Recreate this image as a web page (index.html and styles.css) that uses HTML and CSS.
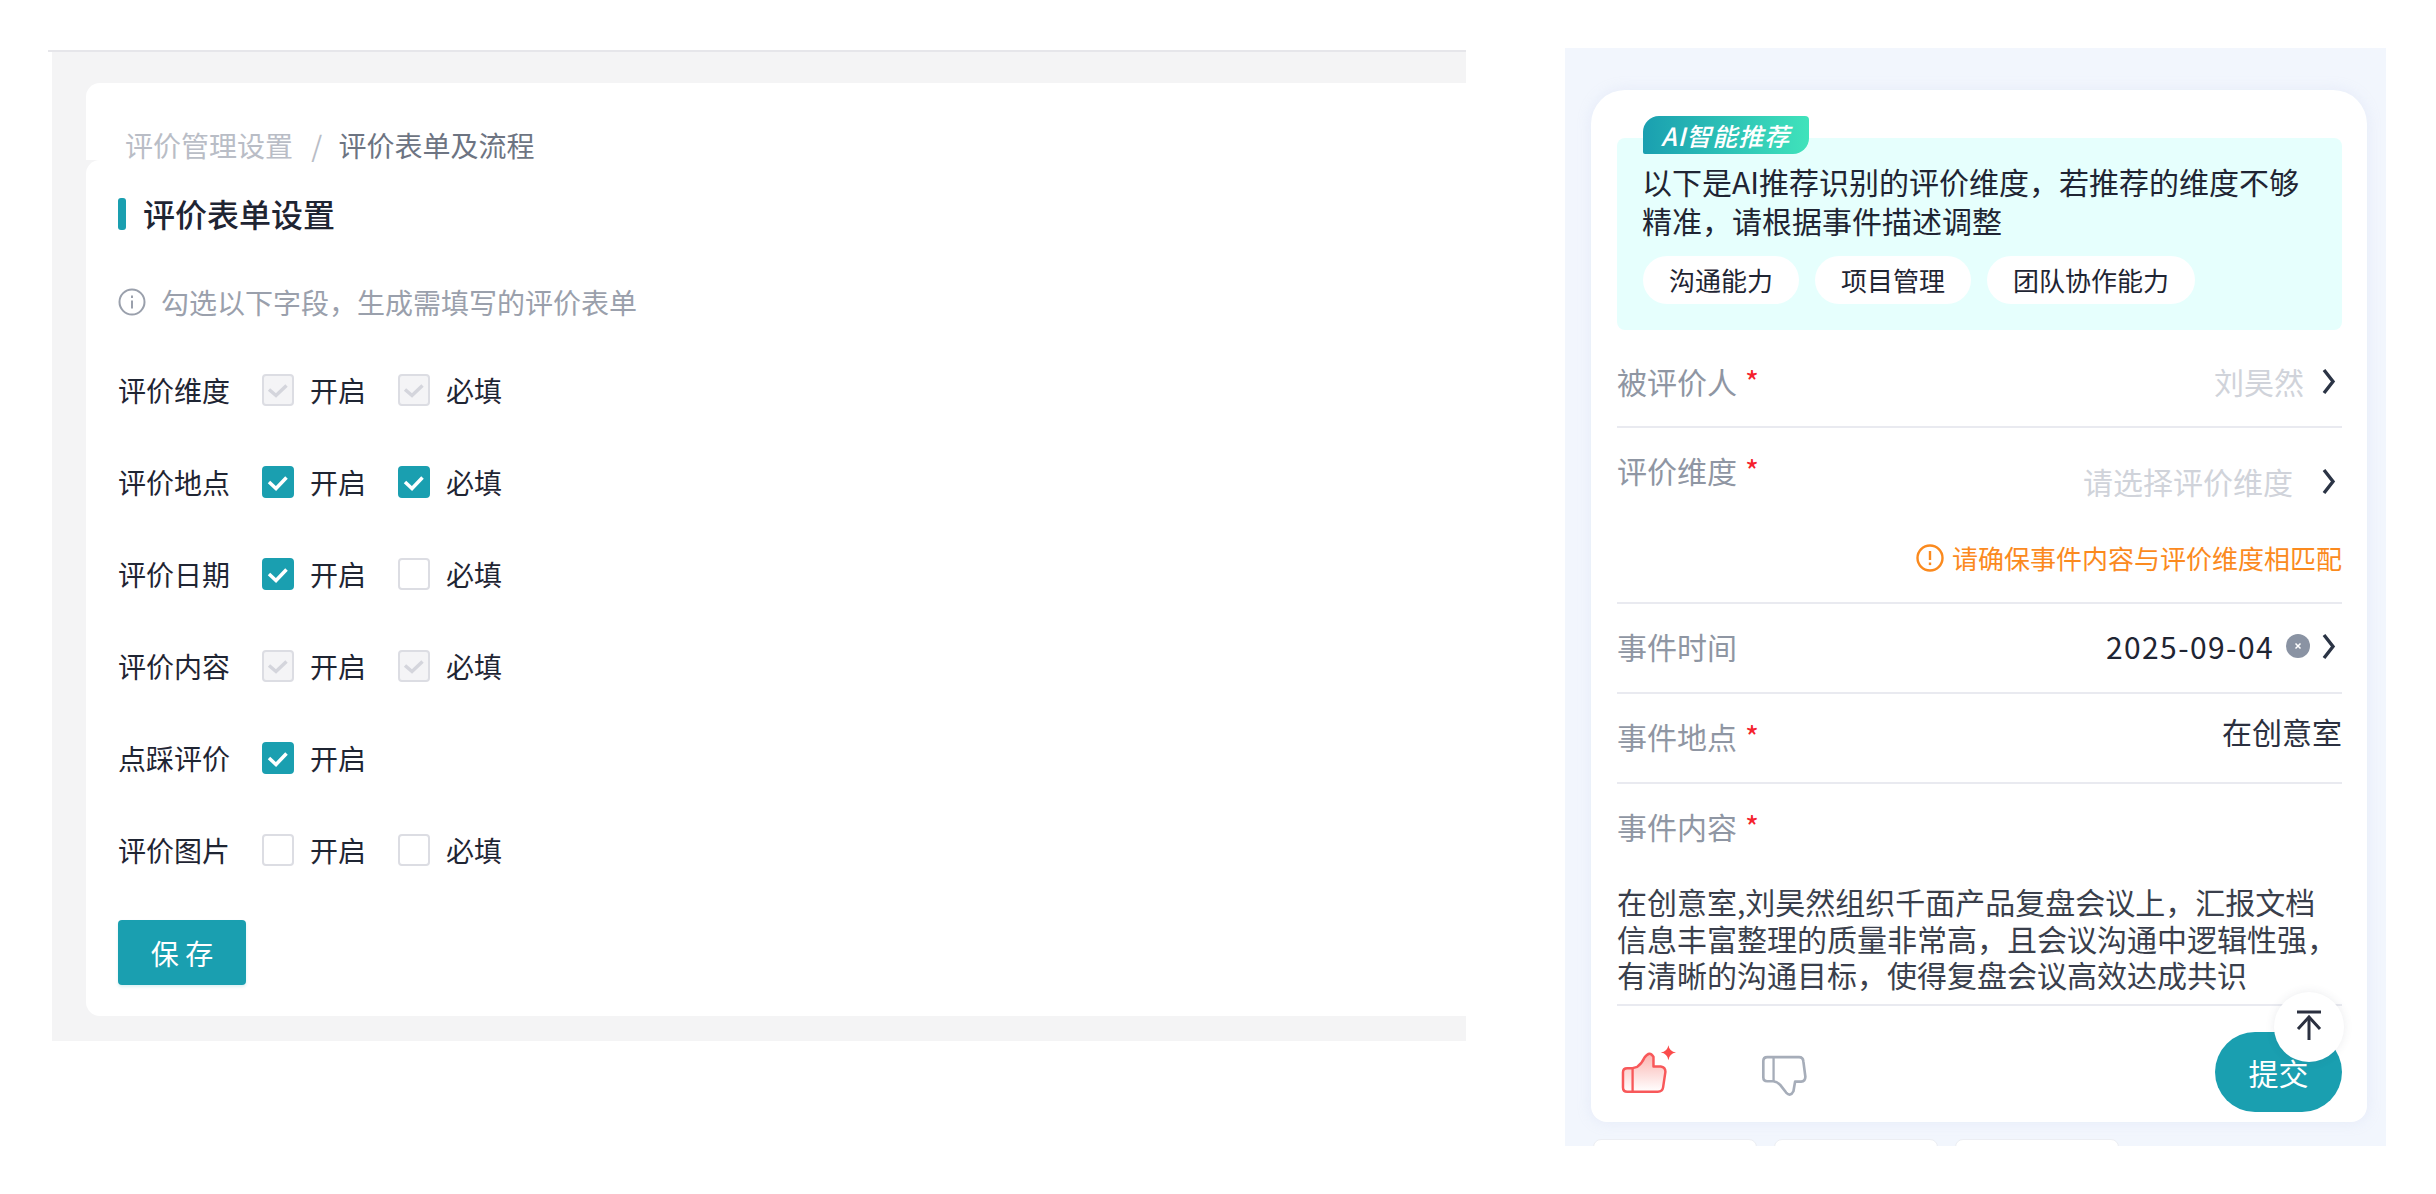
FILE: index.html
```html
<!DOCTYPE html>
<html lang="zh-CN">
<head>
    <meta charset="UTF-8">
    <title>评价表单设置</title>
    <link rel="stylesheet" href="styles.css">
</head>
<body>
    <div class="page">
        <!-- admin side -->
        <div class="admin">
            <div class="admin-body">
                <div class="crumb-card">
                    <span class="crumb-muted">评价管理设置</span>
                    <span class="crumb-sep">/</span>
                    <span class="crumb-current">评价表单及流程</span>
                </div>
                <div class="form-card">
                    <h1 class="form-title">评价表单设置</h1>
                    <div class="form-hint">
                        <svg class="hint-icon" viewBox="0 0 28 28" fill="none" stroke="#9aa0ac" stroke-width="2">
                            <circle cx="14" cy="14" r="12.500"/>
                            <path d="M14 12.500v8"/>
                            <path d="M14 7.500v2.600"/>
                        </svg>
                        <span>勾选以下字段，生成需填写的评价表单</span>
                    </div>

                    <div class="field-row">
                        <span class="field-name">评价维度</span>
                        <span class="cb cb-disabled"><svg viewBox="0 0 28 28"><path d="M5 13.500l7 6 10.500-10"/></svg></span>
                        <span class="opt">开启</span>
                        <span class="cb cb-disabled"><svg viewBox="0 0 28 28"><path d="M5 13.500l7 6 10.500-10"/></svg></span>
                        <span class="opt">必填</span>
                    </div>
                    <div class="field-row">
                        <span class="field-name">评价地点</span>
                        <span class="cb cb-on"><svg viewBox="0 0 28 28"><path d="M5 14l7 6.500 10.500-11"/></svg></span>
                        <span class="opt">开启</span>
                        <span class="cb cb-on"><svg viewBox="0 0 28 28"><path d="M5 14l7 6.500 10.500-11"/></svg></span>
                        <span class="opt">必填</span>
                    </div>
                    <div class="field-row">
                        <span class="field-name">评价日期</span>
                        <span class="cb cb-on"><svg viewBox="0 0 28 28"><path d="M5 14l7 6.500 10.500-11"/></svg></span>
                        <span class="opt">开启</span>
                        <span class="cb"></span>
                        <span class="opt">必填</span>
                    </div>
                    <div class="field-row">
                        <span class="field-name">评价内容</span>
                        <span class="cb cb-disabled"><svg viewBox="0 0 28 28"><path d="M5 13.500l7 6 10.500-10"/></svg></span>
                        <span class="opt">开启</span>
                        <span class="cb cb-disabled"><svg viewBox="0 0 28 28"><path d="M5 13.500l7 6 10.500-10"/></svg></span>
                        <span class="opt">必填</span>
                    </div>
                    <div class="field-row">
                        <span class="field-name">点踩评价</span>
                        <span class="cb cb-on"><svg viewBox="0 0 28 28"><path d="M5 14l7 6.500 10.500-11"/></svg></span>
                        <span class="opt">开启</span>
                    </div>
                    <div class="field-row">
                        <span class="field-name">评价图片</span>
                        <span class="cb"></span>
                        <span class="opt">开启</span>
                        <span class="cb"></span>
                        <span class="opt">必填</span>
                    </div>

                    <button class="save-btn" type="button">保 存</button>
                </div>
            </div>
        </div>

        <!-- mobile preview -->
        <div class="mobile">
            <div class="sheet">
                <div class="ai-tag"><span class="ai-tag-text">AI智能推荐</span></div>
                <div class="ai-box">
                    <p class="ai-text">以下是AI推荐识别的评价维度，若推荐的维度不够精准，请根据事件描述调整</p>
                    <div class="chips">
                        <span class="chip">沟通能力</span>
                        <span class="chip">项目管理</span>
                        <span class="chip">团队协作能力</span>
                    </div>
                </div>

                <div class="row row-person">
                    <span class="row-label">被评价人<i class="req">*</i></span>
                    <span class="row-value">
                        <span class="placeholder">刘昊然</span>
                        <svg class="chevron" viewBox="0 0 15 26"><path d="M3 1.500l9 11.500-9 11.500"/></svg>
                    </span>
                </div>

                <div class="row row-dimension">
                    <div class="row-main">
                        <span class="row-label">评价维度<i class="req">*</i></span>
                        <span class="row-value dimension-value">
                            <span class="placeholder">请选择评价维度</span>
                            <svg class="chevron chevron-wide" viewBox="0 0 15 26"><path d="M3 1.500l9 11.500-9 11.500"/></svg>
                        </span>
                    </div>
                    <div class="warn">
                        <svg class="warn-icon" viewBox="0 0 28 28" fill="none" stroke="#fb8a1e" stroke-width="2.400">
                            <circle cx="14" cy="14" r="12.500"/>
                            <path d="M14 7v9"/>
                            <path d="M14 18.500v2.600"/>
                        </svg>
                        <span>请确保事件内容与评价维度相匹配</span>
                    </div>
                </div>

                <div class="row row-time">
                    <span class="row-label">事件时间</span>
                    <span class="row-value">
                        <span class="date">2025-09-04</span>
                        <svg class="clear-icon" viewBox="0 0 24 24">
                            <circle cx="12" cy="12" r="12" fill="#8a93a3"/>
                            <path d="M9.500 9.500l5 5M14.500 9.500l-5 5" stroke="#fff" stroke-width="1.500"/>
                        </svg>
                        <svg class="chevron" viewBox="0 0 15 26"><path d="M3 1.500l9 11.500-9 11.500"/></svg>
                    </span>
                </div>

                <div class="row row-place">
                    <span class="row-label">事件地点<i class="req">*</i></span>
                    <span class="place">在创意室</span>
                </div>

                <div class="row row-content">
                    <span class="row-label">事件内容<i class="req">*</i></span>
                    <p class="content-text">在创意室,刘昊然组织千面产品复盘会议上，汇报文档信息丰富整理的质量非常高，且会议沟通中逻辑性强，有清晰的沟通目标，使得复盘会议高效达成共识</p>
                </div>

                <div class="sheet-foot">
                    <svg class="thumb-up" viewBox="60 65 175 155">
                        <defs>
                            <linearGradient id="thumbFill" x1="0" y1="0" x2="0" y2="1">
                                <stop offset="0" stop-color="#fbb4b0"/>
                                <stop offset="1" stop-color="#fff"/>
                            </linearGradient>
                        </defs>
                        <path d="M98 140L112 136Q126 126 134 108Q150 86 161 106L161 135L183 135Q197 137 197 151L190 198Q188 211 174 211L82 211Q69 211 69 198L69 152Q69 140 82 140Z" fill="url(#thumbFill)" stroke="#f8585a" stroke-width="7.500" stroke-linejoin="round"/>
                        <path d="M98 140V211" stroke="#f8585a" stroke-width="7"/>
                        <path d="M206 71Q209 90 229 93Q209 96 206 116Q203 96 183 93Q203 90 206 71Z" fill="#fb4b4b"/>
                    </svg>
                    <svg class="thumb-down" viewBox="480 98 145 132">
                        <path d="M502 107L598 107Q610 107 611 120L617 166Q617 180 604 181L586 181L581 210Q572 228 559 214L541 191Q533 182 520 180L502 180Q490 180 490 168L490 119Q490 107 502 107Z" fill="none" stroke="#a6adb9" stroke-width="8" stroke-linejoin="round"/>
                        <path d="M521 107V180" stroke="#a6adb9" stroke-width="7"/>
                    </svg>
                    <button class="submit-btn" type="button">提交</button>
                </div>

                <div class="back-top">
                    <svg viewBox="0 0 26 30" fill="none" stroke="#2b3040" stroke-width="3">
                        <path d="M1 2h24"/>
                        <path d="M13 7v23"/>
                        <path d="M2 19L13 7l11 12"/>
                    </svg>
                </div>
            </div>

            <div class="peek-row">
                <div class="peek"></div>
                <div class="peek"></div>
                <div class="peek"></div>
            </div>
        </div>
    </div>
</body>
</html>
```

FILE: styles.css
```css
* {
    box-sizing: border-box;
}
body {
    margin: 0;
    background: #fff;
    font-family: "Noto Sans CJK SC", "Noto Sans", sans-serif;
    color: #1f2533;
}
p, h1 {
    margin: 0;
}
.page {
    display: flex;
    align-items: flex-start;
    height: 1194px;
    overflow: hidden;
}

/* admin side */
.admin {
    width: 1418px;
    margin: 50px 0 0 48px;
    flex-shrink: 0;
    border-top: 2px solid #e6e6ea;
}
.admin-body {
    margin-left: 4px;
    padding: 31px 0 25px 34px;
    background: #f4f4f5;
}
.crumb-card {
    height: 77px;
    padding: 42px 0 0 39px;
    background: #fff;
    border-radius: 14px 0 0 0;
    font-size: 28px;
    line-height: 40px;
    white-space: nowrap;
}
.crumb-muted {
    color: #b9bdc6;
}
.crumb-sep {
    margin: 0 10px 0 12px;
    color: #b9bdc6;
}
.crumb-current {
    color: #6d7482;
}
.form-card {
    height: 856px;
    padding: 33px 0 0 32px;
    background: #fff;
    border-radius: 14px 0 0 14px;
}
.form-title {
    position: relative;
    padding-left: 25px;
    font-size: 32px;
    line-height: 40px;
    font-weight: 500;
    color: #1f2533;
}
.form-title::before {
    content: "";
    position: absolute;
    left: 0;
    top: 5px;
    width: 8px;
    height: 32px;
    border-radius: 3px;
    background: #1a9fb0;
}
.form-hint {
    display: flex;
    align-items: center;
    gap: 15px;
    margin: 49px 0 22px;
    font-size: 28px;
    line-height: 40px;
    color: #9aa0ac;
}
.hint-icon {
    width: 28px;
    height: 28px;
}
.field-row {
    display: flex;
    align-items: center;
    height: 92px;
    font-size: 28px;
}
.field-name {
    width: 144px;
}
.cb {
    display: flex;
    width: 32px;
    height: 32px;
    margin-right: 16px;
    border: 2px solid #dcdde3;
    border-radius: 4px;
    background: #fff;
}
.cb svg {
    width: 100%;
    height: 100%;
    fill: none;
    stroke-width: 3.500;
}
.cb-on {
    border-color: #1a9fb0;
    background: #1a9fb0;
}
.cb-on svg {
    stroke: #fff;
}
.cb-disabled {
    background: #f4f4f6;
}
.cb-disabled svg {
    stroke: #d4d5dc;
}
.opt {
    width: 56px;
    margin-right: 32px;
}
.save-btn {
    display: block;
    width: 128px;
    height: 65px;
    margin-top: 24px;
    padding: 0;
    border: none;
    border-radius: 4px;
    background: #1a9fb0;
    box-shadow: 0 2px 3px rgba(26, 159, 176, 0.15);
    color: #fff;
    font-family: inherit;
    font-size: 28px;
}

/* mobile preview */
.mobile {
    width: 821px;
    height: 1098px;
    margin: 48px 0 0 99px;
    padding: 42px 19px 0 26px;
    flex-shrink: 0;
    overflow: hidden;
    background: #f2f6fd;
}
.sheet {
    position: relative;
    width: 776px;
    height: 1032px;
    padding: 26px 25px 0 26px;
    background: #fff;
    border-radius: 34px 34px 16px 16px;
    box-shadow: 0 0 14px rgba(190, 205, 235, 0.25);
}
.ai-tag {
    position: relative;
    width: 166px;
    height: 38px;
    margin: 0 0 -16px 26px;
    padding-left: 18px;
    border-radius: 16px 4px 16px 2px;
    background: linear-gradient(90deg, #1a9fb0, #40e3bb);
    color: #fff;
    font-size: 25px;
    line-height: 38px;
    white-space: nowrap;
}
.ai-tag-text {
    font-style: italic;
    font-weight: 500;
    letter-spacing: 1px;
}
.ai-box {
    height: 192px;
    padding: 24px 26px 0 25px;
    border-radius: 8px;
    background: #e6fffd;
}
.ai-text {
    font-size: 30px;
    line-height: 39px;
}
.chips {
    display: flex;
    gap: 16px;
    margin: 16px 0 0 1px;
}
.chip {
    height: 48px;
    padding: 0 26px;
    border-radius: 24px;
    background: #fff;
    font-size: 26px;
    line-height: 48px;
}
.row {
    border-bottom: 2px solid #e9eaf0;
    font-size: 30px;
}
.row-label {
    color: #8f96a3;
    line-height: 44px;
    white-space: nowrap;
}
.req {
    margin-left: 8px;
    color: #f5222d;
    font-style: normal;
}
.row-value {
    display: flex;
    align-items: center;
    line-height: 44px;
}
.placeholder {
    color: #d0d3da;
}
.chevron {
    width: 15px;
    height: 27px;
    margin: 0 6px 0 17px;
    fill: none;
    stroke: #2b3445;
    stroke-width: 3.400;
}
.chevron-wide {
    margin-left: 28px;
}
.row-person,
.row-time {
    display: flex;
    justify-content: space-between;
    align-items: center;
}
.row-person {
    height: 98px;
    padding-top: 6px;
}
.row-dimension {
    height: 176px;
    padding-top: 20px;
}
.row-main {
    display: flex;
    justify-content: space-between;
}
.dimension-value {
    margin-top: 11px;
}
.warn {
    display: flex;
    justify-content: flex-end;
    align-items: center;
    gap: 8px;
    margin-top: 37px;
    color: #fb8a1e;
    font-size: 26px;
    line-height: 36px;
}
.warn-icon {
    width: 28px;
    height: 28px;
}
.row-time {
    height: 90px;
    padding-bottom: 4px;
}
.date {
    letter-spacing: 1.400px;
}
.clear-icon {
    width: 24px;
    height: 24px;
    margin-left: 12px;
}
.row-time .chevron {
    margin-left: 11px;
}
.row-place {
    display: flex;
    justify-content: space-between;
    align-items: flex-start;
    height: 90px;
    padding-top: 20px;
}
.place {
    margin-top: -5px;
    line-height: 44px;
    color: #2b3040;
}
.row-content {
    height: 222px;
    padding-top: 20px;
}
.content-text {
    margin-top: 35px;
    line-height: 36.500px;
    color: #3a3f4c;
    width: 720px;
}
.sheet-foot {
    display: flex;
    align-items: flex-start;
    padding-top: 26px;
}
.thumb-up {
    width: 58px;
    height: 52px;
    margin: 11px 0 0 3px;
}
.thumb-down {
    width: 48px;
    height: 44px;
    margin: 22px 0 0 82px;
}
.submit-btn {
    width: 127px;
    height: 80px;
    margin-left: auto;
    border: none;
    border-radius: 40px;
    background: #1a9fb0;
    color: #fff;
    font-family: inherit;
    font-size: 30px;
}
.back-top {
    position: absolute;
    top: 902px;
    right: 23px;
    display: flex;
    align-items: center;
    justify-content: center;
    width: 70px;
    height: 70px;
    border-radius: 50%;
    background: #fff;
    box-shadow: 0 0 10px rgba(60, 70, 90, 0.1);
}
.back-top svg {
    width: 26px;
    height: 30px;
    margin-bottom: 4px;
}
.peek-row {
    display: flex;
    gap: 17px;
    margin: 17px 0 0 2px;
}
.peek {
    width: 164px;
    height: 30px;
    border: 1px solid #eceef3;
    border-radius: 8px;
    background: #fff;
}
```
